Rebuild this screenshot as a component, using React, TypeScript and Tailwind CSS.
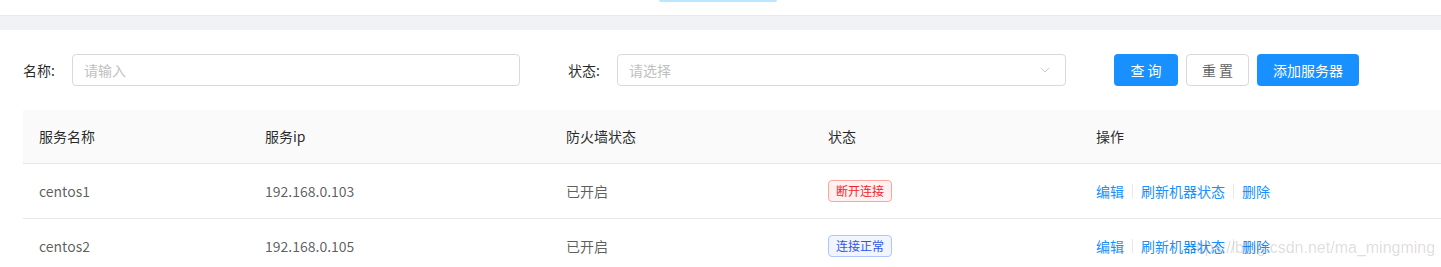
import { ChevronDown } from 'lucide-react';

const rows = [
  { name: 'centos1', ip: '192.168.0.103', firewall: '已开启', ok: false },
  { name: 'centos2', ip: '192.168.0.105', firewall: '已开启', ok: true },
];

function Actions() {
  return (
    <div className="flex items-center text-[#1890ff]">
      <span>编辑</span>
      <span className="mx-2 h-[14px] w-px bg-[#e8e8e8]" />
      <span>刷新机器状态</span>
      <span className="mx-2 h-[14px] w-px bg-[#e8e8e8]" />
      <span>删除</span>
    </div>
  );
}

export default function App() {
  return (
    <div
      className="relative h-[267px] w-[1441px] overflow-hidden bg-white text-[14px]"
      style={{ fontFamily: '"Noto Sans CJK SC", "Liberation Sans", sans-serif' }}
    >
      {/* top nav remnant */}
      <div className="relative h-[16px] border-b border-[#e8e8e8] bg-white">
        <div className="absolute left-[659px] top-0 h-[2px] w-[118px] rounded-b bg-[#bae7ff]" />
      </div>
      <div className="h-[14px] bg-[#f0f2f5]" />

      {/* search form */}
      <div className="flex items-center pl-[23px] pt-[24px]">
        <span className="w-[49px] text-black/85">名称:</span>
        <div className="flex h-[32px] w-[448px] items-center rounded border border-[#d9d9d9] px-[11px] text-[#bfbfbf]">
          请输入
        </div>
        <span className="ml-[48px] w-[49px] text-black/85">状态:</span>
        <div className="flex h-[32px] w-[449px] items-center justify-between rounded border border-[#d9d9d9] pl-[11px] pr-[12px] text-[#bfbfbf]">
          <span>请选择</span>
          <ChevronDown size={16} strokeWidth={1.2} className="text-[#bfbfbf]" />
        </div>
        <div className="ml-[48px] flex gap-2">
          <button className="h-[32px] w-[64px] rounded bg-[#1890ff] text-white">查 询</button>
          <button className="h-[32px] w-[63px] rounded border border-[#d9d9d9] bg-white text-black/65">重 置</button>
          <button className="h-[32px] w-[102px] rounded bg-[#1890ff] text-white">添加服务器</button>
        </div>
      </div>

      {/* table */}
      <div className="ml-[23px] mt-[24px]">
        <div className="grid h-[54px] grid-cols-[226px_301px_262px_268px_1fr] items-center border-b border-[#e8e8e8] bg-[#fafafa] text-black/85">
          <div className="px-4">服务名称</div>
          <div className="px-4">服务ip</div>
          <div className="px-4">防火墙状态</div>
          <div className="px-4">状态</div>
          <div className="px-4">操作</div>
        </div>
        {rows.map((r) => (
          <div
            key={r.name}
            className="grid h-[55px] grid-cols-[226px_301px_262px_268px_1fr] items-center border-b border-[#e8e8e8] text-black/65"
          >
            <div className="px-4">{r.name}</div>
            <div className="px-4">{r.ip}</div>
            <div className="px-4">{r.firewall}</div>
            <div className="px-4">
              {r.ok ? (
                <span className="inline-block rounded border border-[#adc6ff] bg-[#f0f5ff] px-[7px] text-[12px] leading-[20px] text-[#2f54eb]">
                  连接正常
                </span>
              ) : (
                <span className="inline-block rounded border border-[#ffa39e] bg-[#fff1f0] px-[7px] text-[12px] leading-[20px] text-[#f5222d]">
                  断开连接
                </span>
              )}
            </div>
            <div className="px-4">
              <Actions />
            </div>
          </div>
        ))}
      </div>

      {/* watermark */}
      <div
        className="pointer-events-none absolute left-[1187px] top-[236px] whitespace-nowrap text-[16px] text-black/15"
        style={{ fontFamily: '"Liberation Sans", sans-serif' }}
      >
        https://blog.csdn.net/ma_mingming
      </div>
    </div>
  );
}
